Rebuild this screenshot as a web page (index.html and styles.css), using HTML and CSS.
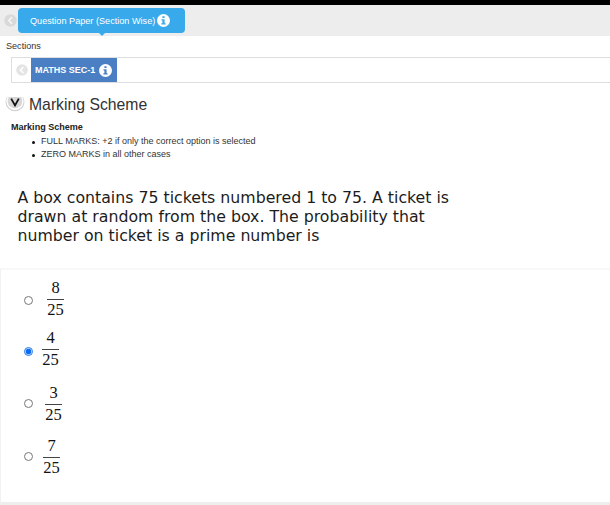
FILE: index.html
```html
<!DOCTYPE html>
<html lang="en">
<head>
<meta charset="utf-8">
<title>Question Paper</title>
<link rel="stylesheet" href="styles.css">
</head>
<body>
<header class="topbar">
  <svg class="prev" width="13" height="13" viewBox="0 0 13 13"><circle cx="6.5" cy="6.5" r="6.2" fill="#d9d9d9"/><path d="M8 3.2 4.8 6.5 8 9.8" fill="none" stroke="#f4f4f4" stroke-width="1.7"/></svg>
  <div class="paper"><span class="paper-name">Question Paper (Section Wise)</span>
    <svg width="13" height="13" viewBox="0 0 13 13"><circle cx="6.5" cy="6.5" r="6.5" fill="#fff"/><path d="M5.4 2.2h2.2v1.9H5.4zM4.5 5.2h3.1v4h1v1.3H4.4V9.2h1V6.5h-.9z" fill="#38a9eb"/></svg>
  </div>
</header>
<div class="sections-label"><span>Sections</span></div>
<nav class="sections">
  <svg class="prev" width="12" height="12" viewBox="0 0 13 13"><circle cx="6.5" cy="6.5" r="6.3" fill="#e4e4e4"/><path d="M8 3.2 4.8 6.5 8 9.8" fill="none" stroke="#fff" stroke-width="1.7"/></svg>
  <div class="tab"><span class="tab-name">MATHS SEC-1</span>
    <svg width="13" height="13" viewBox="0 0 13 13"><circle cx="6.5" cy="6.5" r="6.5" fill="#fff"/><path d="M5.4 2.2h2.2v1.9H5.4zM4.5 5.2h3.1v4h1v1.3H4.4V9.2h1V6.5h-.9z" fill="#4a80c3"/></svg>
  </div>
</nav>
<main>
  <div class="heading">
    <svg width="20" height="18" viewBox="0 0 20 18"><path d="M2 1A9.4 9.4 0 1 0 18 1z" fill="#d0d0d0"/><path d="M2.6 1A8.6 8.6 0 1 0 17.4 1z" fill="#fff"/><path d="M3.8 1A7.4 7.4 0 1 0 16.2 1z" fill="#d8d8d8"/><path d="M6.2 2.6 10 9.4 13.8 2.6" fill="none" stroke="#111" stroke-width="1.8"/></svg>
    <h1><span>Marking Scheme</span></h1>
  </div>
  <h2><span>Marking Scheme</span></h2>
  <ul class="rules">
    <li><span>FULL MARKS: +2 if only the correct option is selected</span></li>
    <li><span>ZERO MARKS in all other cases</span></li>
  </ul>
  <p class="question"><span>A box contains 75 tickets numbered 1 to 75. A ticket is</span><br><span>drawn at random from the box. The probability that</span><br><span>number on ticket is a prime number is</span></p>
</main>
<section class="options">
  <label class="option first"><span class="radio"></span><span class="fraction"><span class="num">8</span><span>25</span></span></label>
  <label class="option second"><span class="radio checked"></span><span class="fraction"><span class="num">4</span><span>25</span></span></label>
  <label class="option third"><span class="radio"></span><span class="fraction"><span class="num">3</span><span>25</span></span></label>
  <label class="option fourth"><span class="radio"></span><span class="fraction"><span class="num">7</span><span>25</span></span></label>
</section>
</body>
</html>
```
FILE: styles.css
```css
* { box-sizing: border-box; }
body {
  margin: 0;
  height: 505px;
  overflow: hidden;
  background: #fff;
  color: #333;
  font-family: "Liberation Sans", Arial, sans-serif;
  white-space: nowrap;
}
svg { display: block; flex: none; }
.topbar {
  height: 36px;
  border-top: 5px solid #000;
  background: #ededed;
  display: flex;
  align-items: flex-start;
  padding: 3px 0 0 4px;
}
.topbar .prev { margin-top: 6px; }
.paper {
  position: relative;
  width: 167px;
  height: 25px;
  margin-left: 1px;
  padding-left: 12px;
  border-radius: 4px;
  background: #38a9eb;
  color: #fff;
  font-size: 9.15px;
  display: flex;
  align-items: center;
  gap: 3px;
}
.paper::after {
  content: "";
  position: absolute;
  left: 80px;
  top: 24px;
  border: 4px solid transparent;
  border-top-color: #38a9eb;
  border-bottom: 0;
}
.paper-name { width: 124px; }
.sections-label { height: 20px; padding-left: 6px; font-size: 9.1px; line-height: 20px; }
.sections {
  height: 26px;
  margin: 1px 0 0 11px;
  border: 1px solid #dedede;
  border-right: 0;
  display: flex;
  align-items: center;
  padding-left: 4px;
}
.tab {
  width: 86px;
  height: 24px;
  margin-left: 3px;
  padding-left: 4px;
  background: #4a80c3;
  color: #fff;
  font-size: 9px;
  font-weight: bold;
  display: flex;
  align-items: center;
}
.tab-name { width: 64px; }
main { height: 185px; }
.heading { height: 38px; padding: 13px 0 0 5px; display: flex; align-items: flex-start; }
h1 { margin: 0 0 0 4px; font-size: 15.75px; line-height: 18px; font-weight: normal; }
h2 { margin: 0 0 0 11px; height: 14px; font-size: 9.05px; line-height: 13px; color: #222; }
.rules { margin: 0; padding: 0 0 0 41px; font-size: 9px; line-height: 13px; list-style: none; }
.rules li { position: relative; }
.rules li::before {
  content: "";
  position: absolute;
  left: -9px;
  top: 6px;
  width: 3px;
  height: 3px;
  border-radius: 50%;
  background: #111;
}
.question {
  margin: 27px 0 0 17.5px;
  font: 15.75px/19px "DejaVu Sans", sans-serif;
  color: #1c1c1c;
}
.options {
  height: 237px;
  border-top: 2px solid #f8f8f8;
  border-left: 1px solid #f2f2f2;
  border-bottom: 3px solid #eee;
  padding: 9px 0 0 23px;
}
.option { height: 50px; display: flex; align-items: flex-start; color: #111; }
.radio {
  width: 9px;
  height: 9px;
  margin-top: 17px;
  border: 1px solid #777;
  border-radius: 50%;
}
.checked { border-color: #1a78ea; background: radial-gradient(circle, #0b6cf0 2.5px, #fff 3.3px); }
.fraction {
  width: 17px;
  font: 16.5px/20px "Liberation Serif", serif;
  text-align: center;
}
.fraction > span { display: block; }
.fraction .num { height: 21px; line-height: 18px; border-bottom: 1px solid #444; }
.first .fraction { margin-left: 14px; }
.second { height: 55px; }
.second .fraction { margin-left: 9px; }
.second .radio { margin-top: 18px; }
.third { height: 53px; }
.third .fraction { margin-left: 12px; }
.third .radio { margin-top: 15px; }
.fourth .fraction { margin-left: 10px; }
.fourth .radio { margin-top: 15px; }
```
